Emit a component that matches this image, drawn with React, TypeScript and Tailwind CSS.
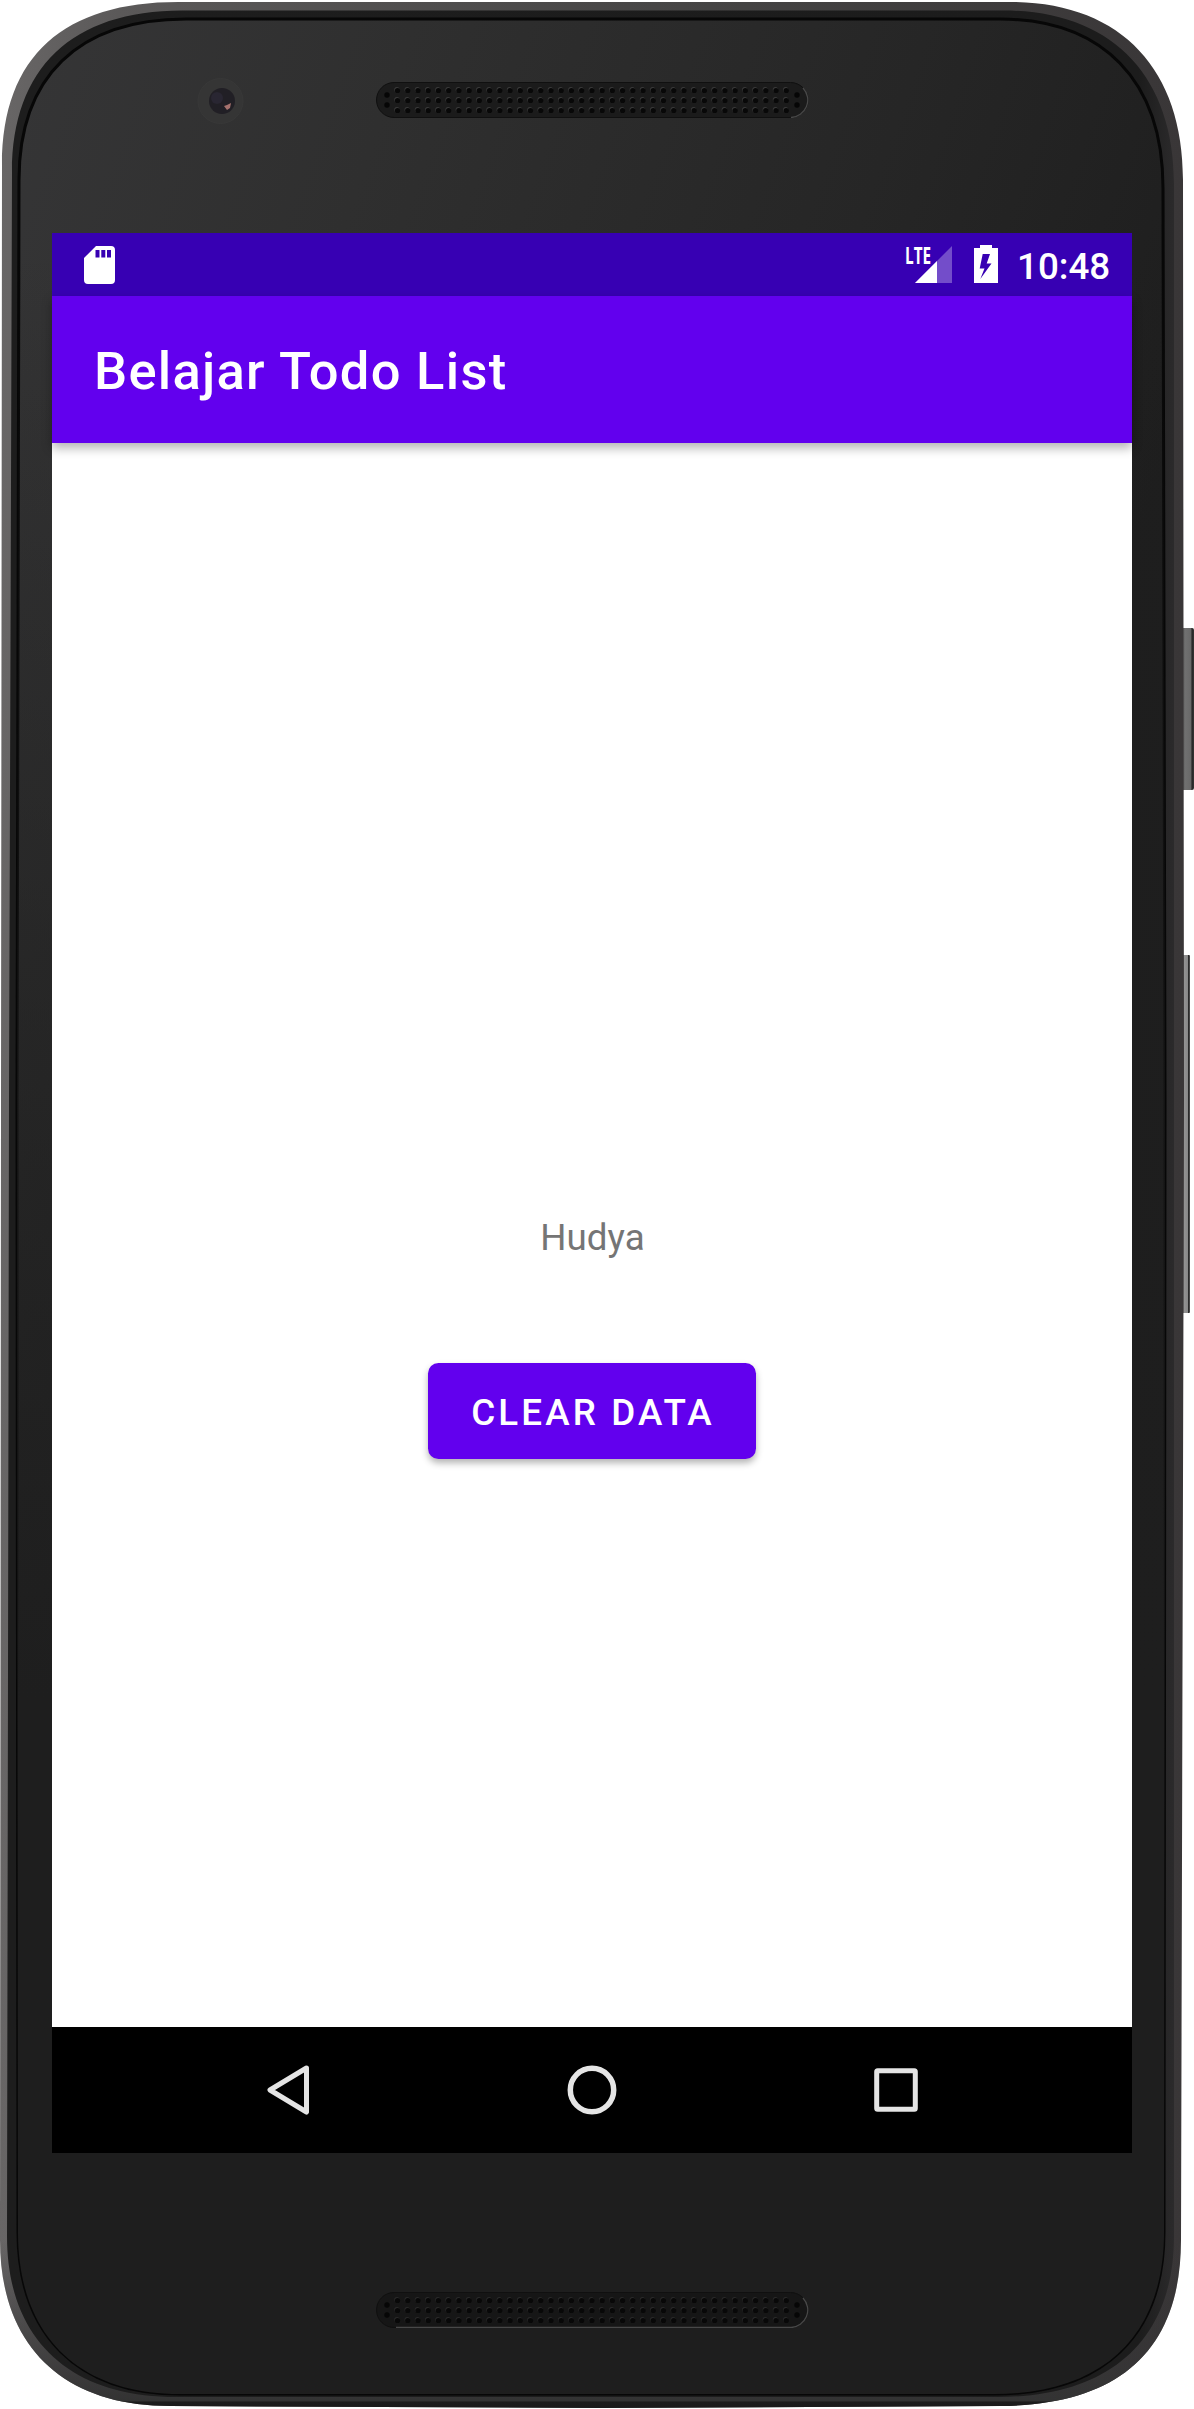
import type { ReactNode } from 'react';

const OUTLINE =
  'M2 165 C2 55 65 2 178 2 H1010 C1120 2 1183 68 1183 180 L1184 1100 L1181 2240 C1181 2350 1120 2405 1000 2406 L600 2408 L170 2406 C62 2406 0 2345 0 2240 L1 1100 Z';
const RIM =
  'M12 172 C12 68 72 10.500 182 10.500 H1004 C1110 10.500 1174 74 1174 184 L1174 2236 C1174 2340 1110 2397 998 2397 H176 C70 2397 7 2340 7 2236 L9 1100 Z';
const GLASS =
  'M19 180 C19 77 78 19 186 19 H1000 C1102 19 1163 80 1163 188 L1165 1100 L1164 2232 C1164 2335 1104 2394 994 2394 H180 C78 2394 18 2335 18 2232 L17 1100 Z';

function Body() {
  return (
    <svg className="absolute inset-0 h-full w-full" viewBox="0 0 1194 2409" aria-hidden="true">
      <defs>
        <linearGradient id="metal" x1="0" y1="0" x2="1" y2="0">
          <stop offset="0" stopColor="#686666" />
          <stop offset="0.1" stopColor="#5b5959" />
          <stop offset="0.6" stopColor="#454444" />
          <stop offset="1" stopColor="#393637" />
        </linearGradient>
        <linearGradient id="shade" gradientUnits="userSpaceOnUse" x1="0" y1="2240" x2="0" y2="2409">
          <stop offset="0" stopColor="#343334" stopOpacity="0" />
          <stop offset="0.75" stopColor="#353435" stopOpacity="0.8" />
          <stop offset="0.95" stopColor="#333" />
          <stop offset="0.96" stopColor="#1c1c1c" />
          <stop offset="1" stopColor="#1a1a1a" />
        </linearGradient>
        <linearGradient id="rim" x1="0" y1="0" x2="1" y2="0">
          <stop offset="0" stopColor="#1d1d1d" />
          <stop offset="0.97" stopColor="#1c1c1c" />
          <stop offset="1" stopColor="#2b2a2b" />
        </linearGradient>
        <linearGradient id="glass" gradientUnits="userSpaceOnUse" x1="0" y1="100" x2="1150" y2="500">
          <stop offset="0" stopColor="#353536" />
          <stop offset="0.3" stopColor="#2f2f2f" />
          <stop offset="0.7" stopColor="#262626" />
          <stop offset="1" stopColor="#1e1e1e" />
        </linearGradient>
        <linearGradient id="lower" gradientUnits="userSpaceOnUse" x1="0" y1="250" x2="0" y2="1700">
          <stop offset="0" stopColor="#1d1d1d" stopOpacity="0" />
          <stop offset="1" stopColor="#1e1e1e" />
        </linearGradient>
        <linearGradient id="key" x1="0" y1="0" x2="1" y2="0">
          <stop offset="0" stopColor="#555" />
          <stop offset="0.35" stopColor="#707070" />
          <stop offset="0.75" stopColor="#696969" />
          <stop offset="0.85" stopColor="#252525" />
          <stop offset="1" stopColor="#353535" />
        </linearGradient>
        <linearGradient id="volume" x1="0" y1="0" x2="1" y2="0">
          <stop offset="0" stopColor="#555" />
          <stop offset="0.3" stopColor="#929292" />
          <stop offset="0.7" stopColor="#888" />
          <stop offset="0.8" stopColor="#292929" />
          <stop offset="1" stopColor="#555" />
        </linearGradient>
      </defs>
      <rect x="1181" y="628" width="13" height="162" rx="2" fill="url(#key)" />
      <rect x="1182" y="955" width="8" height="358" rx="1" fill="url(#volume)" />
      <path d={OUTLINE} fill="url(#metal)" />
      <path d={OUTLINE} fill="url(#shade)" />
      <path d={RIM} fill="url(#rim)" />
      <path d={GLASS} fill="url(#glass)" stroke="#070707" strokeWidth="3" />
      <path d={GLASS} fill="url(#lower)" />
      <circle cx="220.500" cy="101" r="22.500" fill="#353535" stroke="#383838" />
      <circle cx="222" cy="101" r="13" fill="#211f25" />
      <circle cx="217" cy="98" r="6" fill="#292632" />
      <path d="M224 106 l3-1 4-2 -1 5 -3 2 z" fill="#a5716d" />
    </svg>
  );
}

function Grille({ lower = false }: { lower?: boolean }) {
  const dots: ReactNode[] = [];
  for (let i = 0; i < 39; i++) {
    for (let j = 0; j < 3; j++) {
      const x = 21.5 + i * 10.23;
      const y = 8.5 + j * 10;
      dots.push(
        <g key={`${i}-${j}`}>
          <circle cx={x - 0.6} cy={y - 0.8} r="2.600" fill={lower ? '#2a2a2a' : '#3a3a3a'} />
          <circle cx={x} cy={y} r="2.600" fill="#080808" />
        </g>,
      );
    }
  }
  return (
    <svg className="block h-9 w-[434px]" viewBox="0 0 434 36" aria-hidden="true">
      <rect x="0.500" y="0.500" width="431.500" height="35" rx="17.500" fill={lower ? '#161616' : '#1b1b1b'} stroke="#101010" />
      <path
        d={lower ? 'M20 35.500 H415 A17.500 17.500 0 0 0 427 6' : 'M415 35.500 A17.500 17.500 0 0 0 427 6'}
        fill="none"
        stroke="#484848"
        strokeWidth="1.300"
      />
      {dots}
      {[11, 421].map((x) => [13, 23].map((y) => <circle key={`${x}-${y}`} cx={x} cy={y} r="2.700" fill="#060606" />))}
    </svg>
  );
}

function StatusBar() {
  return (
    <div className="flex h-[63px] items-start bg-[#3700b3] pr-[21px] pl-8 text-white">
      <svg className="mt-[13px] h-[38px] w-[31px]" viewBox="0 0 31 38" fill="currentColor" aria-hidden="true">
        <path
          fillRule="evenodd"
          d="M12 0H27a4 4 0 0 1 4 4V34a4 4 0 0 1-4 4H4a4 4 0 0 1-4-4V12ZM11.500 4V11.500H15.500V4ZM17.300 4V11.500H21.300V4ZM23 4V11.500H27V4Z"
        />
      </svg>
      <div className="ml-auto flex items-start">
        <div className="relative mt-[13px] h-[37px] w-[46px]">
          <svg className="h-full w-full" viewBox="0 0 46 37" fill="currentColor" aria-hidden="true">
            <path d="M9 37L46 0V37Z" opacity="0.3" />
            <path d="M9 37L31 15V37Z" />
          </svg>
          <span className="absolute top-px -left-px origin-left scale-x-[0.68] font-['Open_Sans'] text-[22.500px] leading-[17px] font-bold">
            LTE
          </span>
        </div>
        <svg className="mt-3 ml-[22px] h-[38px] w-6" viewBox="0 0 24 38" fill="currentColor" aria-hidden="true">
          <path fillRule="evenodd" d="M6 0H18V3H24V38H0V3H6ZM8.700 9L5.700 23.500H10.500L6.300 34L17.500 18.500H12.700L16 9Z" />
        </svg>
        <span className="mt-[15px] ml-[19px] w-[94px] text-[36.750px] leading-[37px] font-medium whitespace-nowrap">10:48</span>
      </div>
    </div>
  );
}

function NavBar() {
  return (
    <div className="flex h-[126px] items-center bg-black text-[#e5e5e5]">
      <svg className="ml-[215px] h-[50px] w-[43px]" viewBox="0 0 43 50" fill="none" stroke="currentColor" strokeWidth="5" strokeLinejoin="round" aria-hidden="true">
        <path d="M39.500 3L3 25L39.500 47Z" />
      </svg>
      <svg className="ml-[257px] h-[50px] w-[50px]" viewBox="0 0 50 50" fill="none" stroke="currentColor" strokeWidth="5.500" aria-hidden="true">
        <circle cx="25" cy="25" r="21.700" />
      </svg>
      <svg className="ml-[257px] h-[44px] w-[44px]" viewBox="0 0 44 44" fill="none" stroke="currentColor" strokeWidth="5" strokeLinejoin="round" aria-hidden="true">
        <rect x="2.700" y="2.700" width="38.600" height="38.600" rx="1" />
      </svg>
    </div>
  );
}

export default function App() {
  return (
    <div className="relative h-[2409px] w-[1194px] overflow-hidden bg-white font-[Roboto,sans-serif]">
      <Body />
      <div className="relative flex h-full flex-col pl-[52px]">
        <div className="flex h-[233px] pt-[82px] pl-[324px]">
          <Grille />
        </div>
        <div className="flex h-[1920px] w-[1080px] flex-col bg-white">
          <StatusBar />
          <header className="flex h-[147px] items-center bg-[#6200ee] pt-[4px] pl-[42px] shadow-[0_5px_10px_rgba(0,0,0,0.3)]">
            <h1 className="text-[52.500px] leading-none font-medium tracking-[1.280px] text-white">Belajar Todo List</h1>
          </header>
          <main className="flex grow flex-col items-center">
            <p className="mt-[773px] pl-px text-[36.750px] leading-[43px] text-[#757575]">Hudya</p>
            <button className="mt-[104px] h-24 w-[328px] rounded-[10.500px] bg-[#6200ee] pt-[5px] pl-[2px] text-[36.750px] leading-none font-medium tracking-[3.150px] whitespace-nowrap text-white shadow-[0_4px_7px_rgba(0,0,0,0.3)]">
              CLEAR DATA
            </button>
          </main>
          <NavBar />
        </div>
        <div className="flex pt-[139px] pl-[324px]">
          <Grille lower />
        </div>
      </div>
    </div>
  );
}
